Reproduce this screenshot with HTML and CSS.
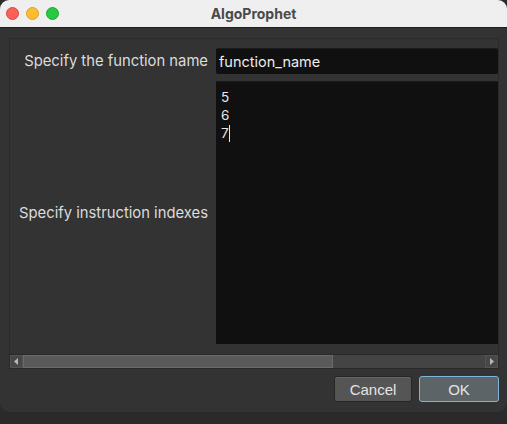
FILE: index.html
```html
<!DOCTYPE html>
<html>
<head>
<meta charset="utf-8">
<link rel="stylesheet" href="styles.css">
</head>
<body>
<div class="window">
  <div class="titlebar">
    <div class="lights">
      <span class="light red"></span>
      <span class="light yellow"></span>
      <span class="light green"></span>
    </div>
    <div class="title">AlgoProphet</div>
  </div>
  <div class="body">
    <div class="frame">
      <div class="form">
        <div class="row">
          <label class="label">Specify the function name</label>
          <div class="input">function_name</div>
        </div>
        <div class="row row2">
          <label class="label">Specify instruction indexes</label>
          <div class="textarea">
            <div class="line">5</div>
            <div class="line">6</div>
            <div class="line">7<span class="caret"></span></div>
          </div>
        </div>
      </div>
      <div class="hscroll">
        <div class="sbtn left"><svg width="11" height="11" viewBox="0 0 11 11"><path d="M7 2 L3 5.5 L7 9 Z" fill="#b8b8b8"/></svg></div>
        <div class="track">
          <div class="thumb"></div>
        </div>
        <div class="sbtn right"><svg width="11" height="11" viewBox="0 0 11 11"><path d="M4 2 L8 5.5 L4 9 Z" fill="#b8b8b8"/></svg></div>
      </div>
    </div>
    <div class="buttons">
      <button class="btn cancel">Cancel</button>
      <button class="btn ok">OK</button>
    </div>
  </div>
  <div class="footer"></div>
</div>
</body>
</html>
```

FILE: styles.css
```css
html, body {
  margin: 0;
  padding: 0;
  width: 507px;
  height: 424px;
  overflow: hidden;
  background: #262626;
  font-family: Inter, "Noto Sans", sans-serif;
}
.window {
  width: 507px;
  height: 424px;
  display: flex;
  flex-direction: column;
  background: #2b2b2b;
}
.titlebar {
  height: 27px;
  background: #efefef;
  border-bottom: 1px solid #1e1e1e;
  position: relative;
  display: flex;
  align-items: center;
  justify-content: center;
  border-radius: 9px 9px 0 0;
}
.lights {
  position: absolute;
  left: 6px;
  top: 7px;
  display: flex;
  gap: 7px;
}
.light {
  width: 13px;
  height: 13px;
  border-radius: 50%;
  box-sizing: border-box;
}
.red { background: #fe5f57; border: 1px solid #e0443e; }
.yellow { background: #febc2e; border: 1px solid #dea123; }
.green { background: #28c840; border: 1px solid #1aab29; }
.title {
  font-family: Inter, "Noto Sans", sans-serif;
  font-weight: 700;
  font-size: 14px;
  color: #4a4a4a;
}
.body {
  background: #333333;
  height: 384px;
  padding: 10px 8px 0 9px;
  box-sizing: border-box;
  border-radius: 0 0 10px 10px;
  display: flex;
  flex-direction: column;
}
.frame {
  border: 1px solid #2a2a2a;
  height: 331px;
  box-sizing: border-box;
  display: flex;
  flex-direction: column;
}
.form {
  flex: 1;
  display: flex;
  flex-direction: column;
  padding: 9px 0 0 0;
  gap: 7px;
  min-height: 0;
}
.row {
  display: flex;
  align-items: center;
}
.label {
  width: 198px;
  margin-right: 8px;
  text-align: right;
  font-size: 14.8px;
  color: #dcdcdc;
  box-sizing: border-box;
  flex-shrink: 0;
  white-space: nowrap;
}
.input {
  flex: 1;
  height: 26px;
  background: #101010;
  color: #ececec;
  font-size: 14.5px;
  line-height: 26px;
  padding-left: 3px;
  border-radius: 2px;
  border-top: 1px solid #1c1c1c;
  box-sizing: border-box;
}
.row2 {
  flex: 1;
}
.textarea {
  flex: 1;
  background: #101010;
  color: #e8e8e8;
  font-size: 13.5px;
  padding: 6px 0 0 5px;
  box-sizing: border-box;
  align-self: stretch;
  border-top: 1px solid #1c1c1c;
}
.line {
  height: 18px;
  line-height: 18px;
}
.caret {
  display: inline-block;
  width: 1px;
  height: 17px;
  background: #e8e8e8;
  vertical-align: -4px;
}
.hscroll {
  height: 14px;
  margin-top: 10px;
  display: flex;
  background: #3c3c3c;
  border-top: 1px solid #2a2a2a;
  box-sizing: border-box;
}
.sbtn {
  width: 13px;
  height: 13px;
  background: #474747;
  border: 1px solid #545454;
  box-sizing: border-box;
  display: flex;
  align-items: center;
  justify-content: center;
}
.sbtn svg { display: block; }
.track {
  flex: 1;
  background: #444444;
  display: flex;
}
.thumb {
  width: 310px;
  background: #5a5a5a;
  border: 1px solid #6a6a6a;
  box-sizing: border-box;
}
.buttons {
  display: flex;
  justify-content: flex-end;
  gap: 7px;
  margin-top: 7px;
}
.btn {
  height: 26px;
  border-radius: 3px;
  font-family: "Liberation Sans", Arial, sans-serif;
  font-size: 15px;
  color: #e4e4e4;
  box-sizing: border-box;
  padding: 0;
}
.cancel {
  width: 78px;
  background: #555555;
  border: 1px solid #262626;
  box-shadow: inset 0 1px 0 #666;
}
.ok {
  width: 80px;
  background: #5c6468;
  border: 1px solid #7fb3d8;
}
.footer {
  flex: 1;
  background: #2a2a2a;
}
```
